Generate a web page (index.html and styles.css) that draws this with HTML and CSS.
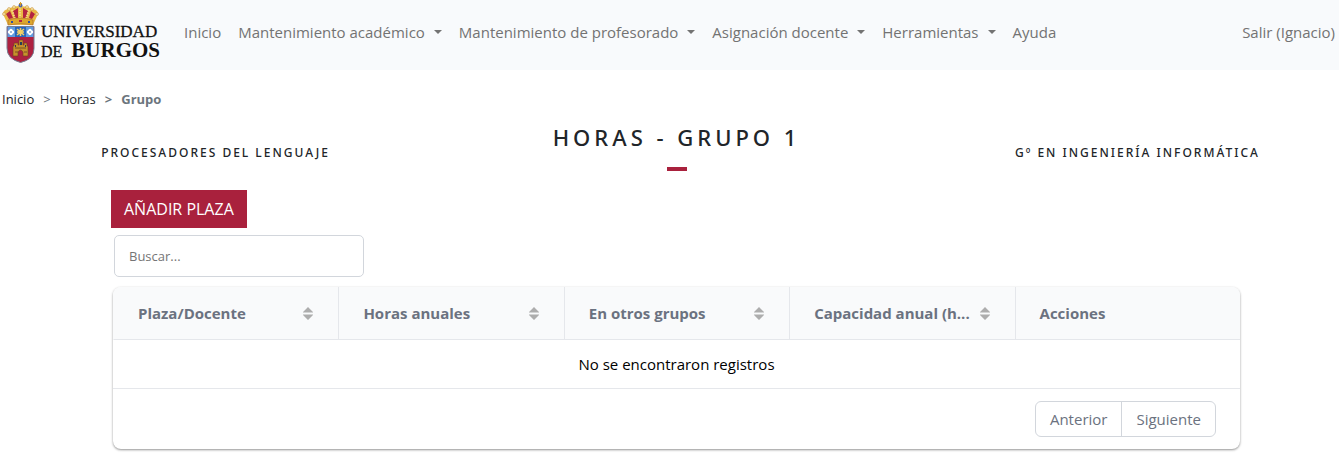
FILE: index.html
```html
<!DOCTYPE html>
<html lang="es">
<head>
<meta charset="utf-8">
<title>Horas - Grupo 1</title>
<link rel="stylesheet" href="styles.css">
</head>
<body>
<svg class="sprite" aria-hidden="true">
  <symbol id="sort" viewBox="0 0 10 13"><path d="M5 0l5 5H0zM0 8h10l-5 5z"/><path d="M0 5h10v1H0zM0 7h10v1H0z" opacity=".5"/></symbol>
</svg>
<header class="navbar">
  <a class="brand" href="#" aria-label="Universidad de Burgos">
    <svg class="crest" viewBox="0 0 37 61" aria-hidden="true">
      <path d="M6 23L1 12Q1 8 6 7q5-3 12-3t13 3q5 1 5 5l-5 11z" fill="#e9b945"/>
      <path d="M7 17l-3-5 4-3 3 7zM13 16l-2-7 5-3v10zM21 16V6l5 3-2 7zM27 16l2-7 4 3-3 5z" fill="#b32440"/>
      <path d="M18 5v12M10 8l3 9M27 8l-3 9" stroke="#f5d785" stroke-width="2" stroke-dasharray="1.5 1"/>
      <path d="M6 18q12-4 25 0v5q-12-3-25 0z" fill="#dca72d" stroke="#a9672a" stroke-width=".6"/>
      <path d="M9 20h2M26 20h2" stroke="#324f9f" stroke-width="2"/><path d="M17 19h3" stroke="#b32440" stroke-width="2"/>
      <circle cx="18.500" cy="3.500" r="2" fill="#5267a5"/><path d="M18.500 0v4M17 1.500h3" stroke="#d39c2d"/>
      <g fill="#f3dfa2" stroke="#c78f37" stroke-width=".5"><circle cx="2" cy="12" r="1.500"/><circle cx="7" cy="7" r="1.500"/><circle cx="12" cy="5" r="1.500"/><circle cx="25" cy="5" r="1.500"/><circle cx="30" cy="7" r="1.500"/><circle cx="35" cy="12" r="1.500"/></g>
      <path d="M5 24.500h27v22q0 11-13.500 14Q5 57 5 46z" fill="#ad2040" stroke="#777f92"/>
      <path d="M5.500 25h26v10h-26z" fill="#5e9bdf"/><path d="M13 25h11v10H13z" fill="#2865bb"/>
      <path d="M15 27l7 6M22 27l-7 6M18.500 26v8M15 30h7" stroke="#f0ce65" stroke-width="1.600"/>
      <g fill="#fff"><circle cx="9" cy="28.500" r="1.700"/><circle cx="9" cy="31.500" r="1.700"/><circle cx="7.500" cy="30" r="1.700"/><circle cx="10.500" cy="30" r="1.700"/><circle cx="28" cy="28.500" r="1.700"/><circle cx="28" cy="31.500" r="1.700"/><circle cx="26.500" cy="30" r="1.700"/><circle cx="29.500" cy="30" r="1.700"/></g>
      <circle cx="9" cy="30" r="1" fill="#86a7cd"/><circle cx="28" cy="30" r="1" fill="#86a7cd"/>
      <path d="M11 54V44h1v-3h4v2h1v-5h4v5h1v-2h3v3h1v10h-5v-4q-2.500-4-5 0v4z" fill="#c7902c" stroke="#704222" stroke-width=".6"/>
      <path d="M13 46h11M13 50h3M22 50h3" stroke="#795021"/><path d="M18 40h2v3h-2zM13 43h1v2h-1zM23 43h1v2h-1z" fill="#263e59"/>
    </svg>
    <span class="wordmark"><span>UNIVERSIDAD</span><span class="wordmark-row"><span class="wordmark-de">DE</span><span class="wordmark-city">BURGOS</span></span></span>
  </a>
  <nav class="menu">
    <a href="#">Inicio</a>
    <button type="button" class="drop">Mantenimiento académico</button>
    <button type="button" class="drop">Mantenimiento de profesorado</button>
    <button type="button" class="drop">Asignación docente</button>
    <button type="button" class="drop">Herramientas</button>
    <a href="#">Ayuda</a>
  </nav>
  <a class="logout" href="#">Salir (Ignacio)</a>
</header>
<nav class="crumbs" aria-label="Ruta">
  <a href="#">Inicio</a><span>&gt;</span><a href="#">Horas</a><b>&gt;</b><b>Grupo</b>
</nav>
<main>
  <div class="titles">
    <h2>Procesadores del Lenguaje</h2>
    <h1>Horas - Grupo 1</h1>
    <h2>Gº en Ingeniería Informática</h2>
  </div>
  <section class="content">
    <button type="button" class="add">AÑADIR PLAZA</button>
    <input class="search" type="search" placeholder="Buscar..." aria-label="Buscar">
    <div class="card">
      <table>
        <thead>
          <tr>
            <th><div class="head"><span>Plaza/Docente</span><button type="button" aria-label="Ordenar por plaza"><svg><use href="#sort"/></svg></button></div></th>
            <th><div class="head"><span>Horas anuales</span><button type="button" aria-label="Ordenar por horas"><svg><use href="#sort"/></svg></button></div></th>
            <th><div class="head"><span>En otros grupos</span><button type="button" aria-label="Ordenar por otros grupos"><svg><use href="#sort"/></svg></button></div></th>
            <th><div class="head"><span>Capacidad anual (h...</span><button type="button" aria-label="Ordenar por capacidad"><svg><use href="#sort"/></svg></button></div></th>
            <th>Acciones</th>
          </tr>
        </thead>
        <tbody><tr><td colspan="5">No se encontraron registros</td></tr></tbody>
      </table>
      <div class="foot"><div class="pager"><button type="button">Anterior</button><button type="button">Siguiente</button></div></div>
    </div>
  </section>
</main>
</body>
</html>
```
FILE: styles.css
```css
* { box-sizing: border-box; }
body { margin: 0; background: #fff; color: #212529; font: 15px/24px "Open Sans", "Noto Sans", sans-serif; overflow-x: hidden; }
button, input { font: inherit; margin: 0; }
a { color: inherit; text-decoration: none; }
.sprite { position: absolute; width: 0; height: 0; }
.navbar { display: flex; align-items: center; height: 70px; padding: 0 4px 6px 2px; background: #f8fafc; color: #737373; }
.brand { display: flex; gap: 2px; width: 174px; }
.crest { width: 37px; height: 61px; }
.wordmark { display: flex; flex-direction: column; width: 119px; padding-top: 20px; color: #111; font: 17px/20px "Liberation Serif", serif; -webkit-text-stroke: 0.3px #111; }
.wordmark-row { display: flex; justify-content: space-between; align-items: baseline; margin-top: -1px; line-height: 19px; }
.wordmark-de { font-size: 16px; }
.wordmark-city { font-size: 21px; font-weight: bold; -webkit-text-stroke: 0; }
.menu { display: flex; flex: 1; gap: 1px; }
.menu a, .menu button { padding: 8px; border: 0; background: none; color: inherit; white-space: nowrap; }
.drop::after { content: ""; display: inline-block; margin-left: 9px; vertical-align: 4px; border: 4px solid transparent; border-top-color: currentColor; border-bottom: 0; }
.crumbs { display: flex; gap: 9px; padding: 17px 2px 0; font-size: 13px; color: #212529; }
.crumbs span, .crumbs b { color: #6c757d; }
.titles { display: grid; grid-template-columns: repeat(3, 1fr); margin: 12px -29px 0 -15px; text-align: center; text-transform: uppercase; }
.titles h1, .titles h2 { margin: 0; font-family: "Noto Sans", sans-serif; font-weight: 500; }
.titles h1 { font-size: 22px; line-height: 28px; letter-spacing: 4px; }
.titles h1::after { content: ""; display: block; width: 20px; height: 4px; margin: 16px auto 0; background: #a9213d; }
.titles h2 { padding-top: 18px; font-size: 12px; line-height: 24px; letter-spacing: 2px; }
.content { padding: 19px 99px 8px 113px; }
.add { display: block; height: 38px; margin-left: -2px; padding: 0 13px; border: 0; background: #a9213d; color: #fff; font-size: 16px; }
.search { display: block; width: 250px; height: 42px; margin: 7px 0 10px 1px; padding: 0 14px; border: 1px solid #d2d6dc; border-radius: 5px; background: #fff; font-size: 13px; }
.search::placeholder { color: #757575; opacity: 1; }
.card { overflow: hidden; border-radius: 8px; box-shadow: 0 1px 3px rgba(0, 0, 0, .2), 0 1px 2px rgba(0, 0, 0, .26); }
table { width: 100%; border-collapse: separate; border-spacing: 0; table-layout: fixed; }
th { height: 53px; padding: 0 25px 0 24px; border-bottom: 1px solid #e5e7eb; border-left: 1px solid #e5e7eb; background: #f9fafb; color: #6b7280; text-align: left; }
th:first-child { border-left-color: transparent; }
.head { display: flex; align-items: center; justify-content: space-between; white-space: nowrap; }
.head button { display: flex; padding: 0; border: 0; background: none; color: #adadad; }
.head svg { width: 10px; height: 13px; fill: currentColor; }
td { height: 49px; padding: 0; border-bottom: 1px solid #e5e7eb; color: #000; text-align: center; }
.foot { display: flex; justify-content: flex-end; padding: 12px 24px; }
.pager { display: flex; height: 36px; border: 1px solid #d2d6dc; border-radius: 6px; }
.pager button { padding: 0 14px; border: 0; background: none; color: #6b7280; }
.pager button + button { border-left: 1px solid #d2d6dc; }
```
